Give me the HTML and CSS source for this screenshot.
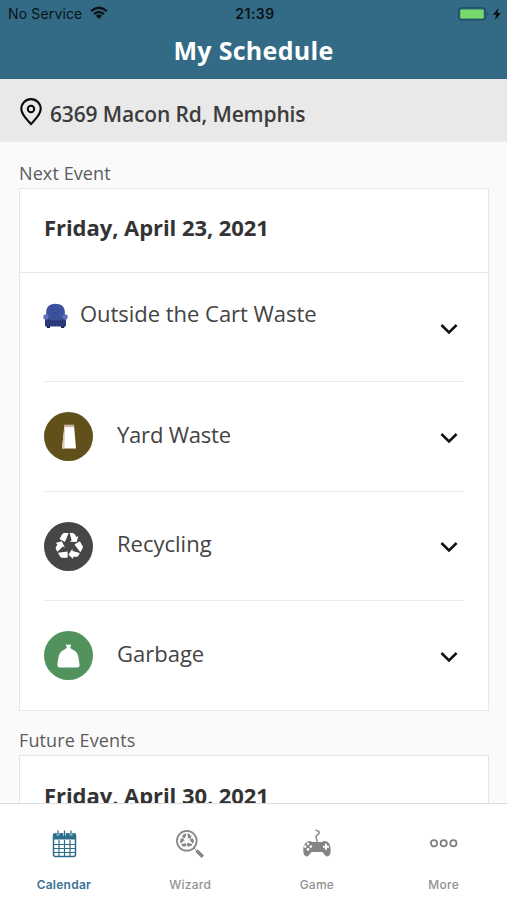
FILE: index.html
```html
<!DOCTYPE html>
<html lang="en">
<head>
<meta charset="utf-8">
<title>My Schedule</title>
<link rel="stylesheet" href="styles.css">
</head>
<body>
<svg class="defs" aria-hidden="true">
  <symbol id="recycle" viewBox="-13 -13 26 26">
    <g id="arrow"><path d="M-8.800-6.600-6.500-10.600Q-5.800-12-4.500-12H-.3L-3.800-3.600ZM.7-12H3.400Q4.700-12 5.500-10.600L6.800-8.400 8.600-9.400 7.200-3.600.6-4 2.400-5.200Z"/></g>
    <use href="#arrow" transform="rotate(120)"/>
    <use href="#arrow" transform="rotate(240)"/>
  </symbol>
  <symbol id="chevron" viewBox="0 0 20 14"><path d="M2.400 3 10 10.500 17.600 3" fill="none" stroke="#111" stroke-width="2.500"/></symbol>
</svg>
<div class="screen">
  <header class="header">
    <div class="status">
      <div class="carrier">No Service
        <svg width="18" height="14" viewBox="0 0 18 14"><g fill="none" stroke="#0a1316" stroke-width="2.300"><path d="M1.200 5.200Q9-1.600 16.800 5.200M4 8.200Q9 3.800 14 8.200"/></g><path d="M5.900 9.800Q9 7.300 12.100 9.800L9 13Z" fill="#0a1316"/></svg>
      </div>
      <div class="clock">21:39</div>
      <div class="power">
        <svg width="44" height="14" viewBox="0 0 44 14"><rect x=".7" y=".9" width="26.600" height="12" rx="2.800" fill="none" stroke="#1f4a5c" stroke-width="1.200"/><rect x="2.300" y="2.500" width="23.400" height="8.900" rx="1" fill="#76d96b"/><path d="M29 5v4q1.600-.5 1.600-2T29 5Z" fill="#1f4a5c"/><path d="M40.500 1 35 7.700H38.200L37 13 43 6.100H39.600Z" fill="#071014"/></svg>
      </div>
    </div>
    <h1>My Schedule</h1>
  </header>
  <div class="address">
    <svg width="22" height="28" viewBox="0 0 22 28"><path d="M11 26C7 21.500 1.300 17 1.300 10.800a9.700 9.700 0 0 1 19.400 0C20.700 17 15 21.500 11 26Z" fill="none" stroke="#090909" stroke-width="2.100"/><circle cx="11" cy="11" r="3.200" fill="none" stroke="#090909" stroke-width="2"/></svg>
    <span class="street">6369 Macon Rd, Memphis</span>
  </div>
  <main class="content">
    <h2><span class="next">Next Event</span></h2>
    <section class="card">
      <h3><span class="date">Friday, April 23, 2021</span></h3>
      <div class="row compact">
        <svg class="chair" width="25" height="26" viewBox="0 0 25 26"><path d="M3 22h4v3H4ZM18 22h4l-1 3h-3Z" fill="#1d2445"/><path d="M3.200 14V9C3.200 3.500 7 .7 12.500.7S21.800 3.500 21.800 9v5Z" fill="#3c51a0"/><path d="M2 14h21v8.500q0 1-1 1H3q-1 0-1-1Z" fill="#293a7c"/><path d="M6 12h13v6H6Z" fill="#3c4f9a"/><path d="M5 18h15" stroke="#22316c"/><circle cx="3" cy="14" r="2.700" fill="#6272b4"/><circle cx="22" cy="14" r="2.700" fill="#6272b4"/><path d="M9 6.500v1M16 6.500v1M12.500 9.500v1" stroke="#273777" stroke-width="1.200"/></svg>
        <span class="name n1">Outside the Cart Waste</span>
        <svg class="chev" width="20" height="14"><use href="#chevron"/></svg>
      </div>
      <div class="row">
        <div class="disc yard"><svg width="49" height="49" viewBox="0 0 49 49"><path d="M20.500 13h9.500l2 23.500H18Z" fill="#fff"/><path d="M20.500 12.700h9.500v2.500H20.500Z" fill="#c9b6a2"/><path d="M20.500 15 18 36l2.500.5.500-21Z" fill="#d9c9b5"/></svg></div>
        <span class="name n2">Yard Waste</span>
        <svg class="chev" width="20" height="14"><use href="#chevron"/></svg>
      </div>
      <div class="row">
        <div class="disc recycling"><svg width="28" height="28"><use href="#recycle" fill="#fff"/></svg></div>
        <span class="name n3">Recycling</span>
        <svg class="chev" width="20" height="14"><use href="#chevron"/></svg>
      </div>
      <div class="row">
        <div class="disc garbage"><svg width="49" height="49" viewBox="0 0 49 49"><path d="M21.800 13.200q2.700 1 5.400 0l-1 3.600c1 1.700 4 2 6.300 4.700 2 2.500 2.500 8 3 11.500.3 2.500-.5 3.500-2.500 3.500H16c-2 0-2.800-1-2.500-3.500.5-3.500 1-9 3-11.500 2.300-2.700 5.300-3 6.300-4.700Z" fill="#fff"/></svg></div>
        <span class="name n4">Garbage</span>
        <svg class="chev" width="20" height="14"><use href="#chevron"/></svg>
      </div>
    </section>
    <h2 class="later"><span class="future">Future Events</span></h2>
    <section class="card upcoming">
      <h3><span class="date">Friday, April 30, 2021</span></h3>
    </section>
  </main>
  <nav class="tabs">
    <div class="tab active">
      <svg width="30" height="30" viewBox="0 0 30 30"><rect x="4.500" y="5" width="22" height="22.500" rx="2" fill="none" stroke="#2f6d8d" stroke-width="1.500"/><path d="M4 4.500h23v6H4Z" fill="#2f6d8d"/><path d="M9 2v5M15.500 2v5M22 2v5" stroke="#fff" stroke-width="2.400"/><path d="M9 1.500V7M15.500 1.500V7M22 1.500V7" stroke="#2f6d8d" stroke-width="1.300"/><path d="M4 15.500h23M4 19.500h23M4 23.500h23M10 11v17M15.500 11v17M21 11v17" stroke="#2f6d8d" stroke-width="1.200"/></svg>
      <span>Calendar</span>
    </div>
    <div class="tab">
      <svg width="30" height="30" viewBox="0 0 30 30"><circle cx="11.800" cy="11.800" r="9.900" fill="none" stroke="#858585" stroke-width="1.700"/><use href="#recycle" x="4.600" y="4.300" width="14.400" height="14.400" fill="#858585"/><path d="m19 19 2.500 2.500" stroke="#858585"/><path d="m21.500 21.500 6.300 6.300" stroke="#858585" stroke-width="3.400"/></svg>
      <span>Wizard</span>
    </div>
    <div class="tab">
      <svg width="30" height="30" viewBox="0 0 30 30"><path d="M13.500 1.200c2.500.3 4.500 1.800 3.600 3.100s-3.500 2.200-3.200 4 1.800 1.500 1.100 5" fill="none" stroke="#858585" stroke-width="1.400"/><path d="M5.500 12.500Q8 11.500 10 13h10q2-1.500 4.500-.5c3 1 4 4.500 4.200 8 .2 4-1.200 7-3.400 7-2.500 0-3.500-4-5.300-4.500H10c-1.800.5-2.800 4.500-5.300 4.500-2.200 0-3.600-3-3.400-7 .2-3.500 1.200-7 4.200-7.500Z" fill="#858585"/><path d="M24 14.700v6M21 17.700h6" stroke="#fff" stroke-width="2"/><g fill="#fff"><circle cx="6" cy="14.800" r="1.300"/><circle cx="6" cy="20.400" r="1.300"/><circle cx="3.200" cy="17.600" r="1.300"/><circle cx="8.800" cy="17.600" r="1.300"/></g></svg>
      <span>Game</span>
    </div>
    <div class="tab">
      <svg width="30" height="30" viewBox="0 0 30 30"><g fill="none" stroke="#808080" stroke-width="1.800"><circle cx="5" cy="14.300" r="3.100"/><circle cx="14.700" cy="14.300" r="3.100"/><circle cx="24.400" cy="14.300" r="3.100"/></g></svg>
      <span>More</span>
    </div>
  </nav>
</div>
</body>
</html>
```
FILE: styles.css
```css
* { box-sizing: border-box; margin: 0; }
body { background: #fafafa; color: #3c3c3c; font-family: "Open Sans", sans-serif; }
svg { display: block; flex: none; }
.defs { display: none; }
.screen { width: 507px; height: 900px; display: flex; flex-direction: column; overflow: hidden; }
.header { height: 79px; flex: none; background: #336b87; }
.status { height: 28px; padding: 0 5px 0 8px; display: grid; grid-template-columns: 1fr auto 1fr; align-items: center; font-family: Inter, sans-serif; font-size: 14px; color: #0a1316; }
.carrier { display: flex; align-items: center; gap: 8px; letter-spacing: .15px; margin-top: -1px; }
.carrier svg { margin-top: -1px; }
.clock { font-weight: 600; letter-spacing: .5px; margin-top: -1px; }
.power { display: flex; justify-content: flex-end; margin-top: -1px; }
h1 { color: #fff; font-size: 25px; line-height: 34px; padding-top: 5px; text-align: center; font-weight: 700; letter-spacing: .3px; }
.address { height: 63px; flex: none; display: flex; align-items: center; gap: 8px; padding: 6px 20px 0; background: #e9e9e9; }
.address svg { margin-top: -4px; }
.street { font-size: 21px; font-weight: 600; line-height: 28px; letter-spacing: -.15px; }
.content { flex: 1; min-height: 0; overflow: hidden; padding: 0 18px 0 19px; }
h2 { height: 46px; padding-top: 19px; font-size: 18px; line-height: 25px; font-weight: 400; color: #5c5c5c; letter-spacing: .1px; }
h2.later { height: 44px; padding-top: 17px; }
.card { background: #fff; border: 1px solid #e6e6e6; }
h3 { height: 84px; padding: 22px 24px 0; font-size: 22px; line-height: 32px; font-weight: 700; color: #333; border-bottom: 1px solid #e9e9e9; letter-spacing: -.06px; }
.upcoming h3 { padding-top: 23px; }
.row { height: 109.3px; margin: 0 24px; display: flex; align-items: center; border-bottom: 1px solid #ececec; }
.row:last-child { border-bottom: 0; }
.disc { width: 49px; height: 49px; margin: 1px 24px 0 0; border-radius: 50%; display: flex; align-items: center; justify-content: center; }
.yard { background: #62501b; }
.recycling { background: #464646; }
.garbage { background: #52925d; margin-top: 0; }
.name { font-size: 22px; line-height: 30px; margin-top: -4px; color: #444; }
.n1 { letter-spacing: -.03px; }
.n2 { letter-spacing: -.2px; }
.n3, .n4 { margin-top: -6px; }
.chev { margin: 3px 5px 0 auto; }
.compact .chair { margin: -23px 12px 0 -1px; }
.compact .name { margin-top: -28px; }
.tabs { height: 97px; flex: none; display: grid; grid-template-columns: repeat(4, 1fr); background: #fff; border-top: 1px solid #dedede; }
.tab { display: flex; flex-direction: column; align-items: center; padding-top: 25px; gap: 17px; font-family: Inter, sans-serif; font-size: 12px; line-height: 17px; letter-spacing: .25px; font-weight: 500; color: #929292; }
.active { color: #397395; font-weight: 600; padding-left: 1px; }
```
